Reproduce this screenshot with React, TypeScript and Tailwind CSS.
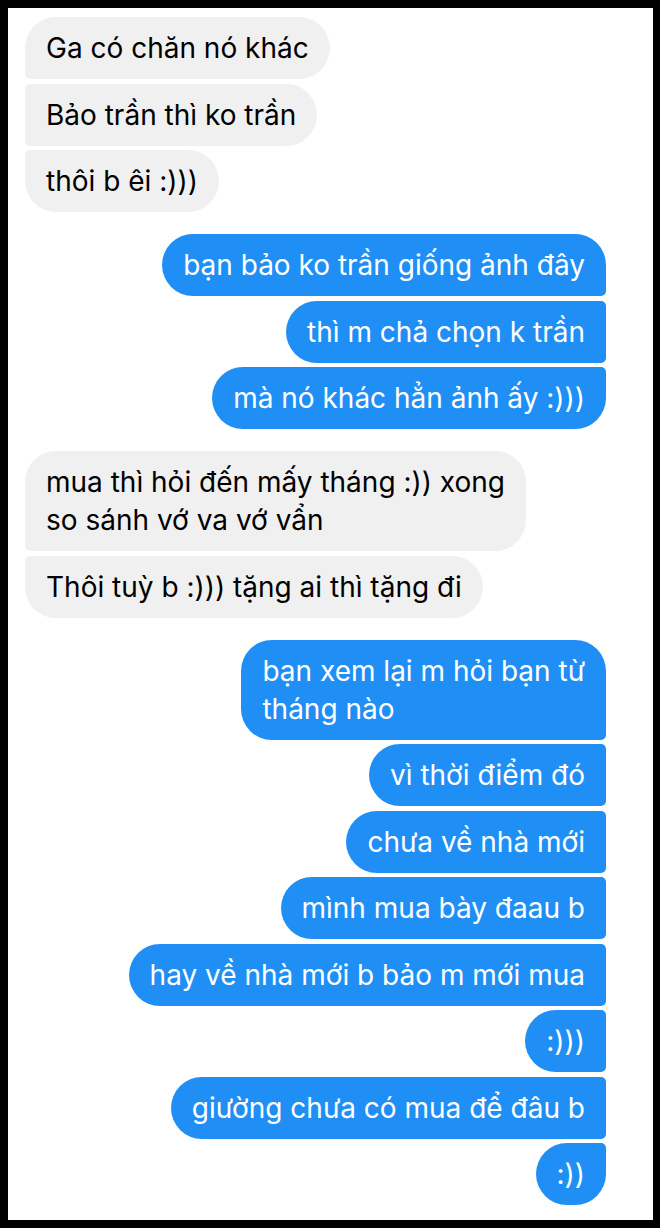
import { clsx as clx } from "clsx"

type Msg = { text: string; lines?: string[] }

const BLUE = "bg-[#1f8ff6] text-white"
const GRAY = "bg-[#f0f0f0] text-black"

function Bubble({
  mine,
  first,
  last,
  children,
}: {
  mine: boolean
  first: boolean
  last: boolean
  children: React.ReactNode
}) {
  // grouped side gets the small corners, like Messenger
  const corners = mine
    ? clx(
        "rounded-l-[31px]",
        first ? "rounded-tr-[31px]" : "rounded-tr-[5px]",
        last ? "rounded-br-[31px]" : "rounded-br-[5px]",
      )
    : clx(
        "rounded-r-[31px]",
        first ? "rounded-tl-[31px]" : "rounded-tl-[5px]",
        last ? "rounded-bl-[31px]" : "rounded-bl-[5px]",
      )
  return (
    <div
      className={clx(
        "px-[21px] py-[12px] text-[28px] leading-[38px] whitespace-nowrap",
        mine ? BLUE : GRAY,
        corners,
      )}
    >
      {children}
    </div>
  )
}

function Group({ mine, msgs }: { mine: boolean; msgs: Msg[] }) {
  return (
    <div
      className={clx(
        "flex flex-col gap-[4.5px]",
        mine ? "items-end" : "items-start",
      )}
    >
      {msgs.map((m, i) => (
        <Bubble
          key={i}
          mine={mine}
          first={i === 0}
          last={i === msgs.length - 1}
        >
          {m.lines
            ? m.lines.map((l, j) => <div key={j}>{l}</div>)
            : m.text}
        </Bubble>
      ))}
    </div>
  )
}

const groups: { mine: boolean; msgs: Msg[] }[] = [
  {
    mine: false,
    msgs: [
      { text: "Ga có chăn nó khác" },
      { text: "Bảo trần thì ko trần" },
      { text: "thôi b êi :)))" },
    ],
  },
  {
    mine: true,
    msgs: [
      { text: "bạn bảo ko trần giống ảnh đây" },
      { text: "thì m chả chọn k trần" },
      { text: "mà nó khác hẳn ảnh ấy :)))" },
    ],
  },
  {
    mine: false,
    msgs: [
      {
        text: "",
        lines: ["mua thì hỏi đến mấy tháng :)) xong", "so sánh vớ va vớ vẩn"],
      },
      { text: "Thôi tuỳ b :))) tặng ai thì tặng đi" },
    ],
  },
  {
    mine: true,
    msgs: [
      { text: "", lines: ["bạn xem lại m hỏi bạn từ", "tháng nào"] },
      { text: "vì thời điểm đó" },
      { text: "chưa về nhà mới" },
      { text: "mình mua bày đaau b" },
      { text: "hay về nhà mới b bảo m mới mua" },
      { text: ":)))" },
      { text: "giường chưa có mua để đâu b" },
      { text: ":))" },
    ],
  },
]

export default function App() {
  return (
    <div className="h-[1228px] w-[660px] bg-black pt-[8px] pr-[7px] pb-[8px] pl-[8px] font-['Inter','Liberation_Sans',Arial,sans-serif]">
      <div className="flex h-full flex-col gap-[22px] bg-white pt-[9px] pr-[47px] pl-[17px]">
        {groups.map((g, i) => (
          <Group key={i} mine={g.mine} msgs={g.msgs} />
        ))}
      </div>
    </div>
  )
}
